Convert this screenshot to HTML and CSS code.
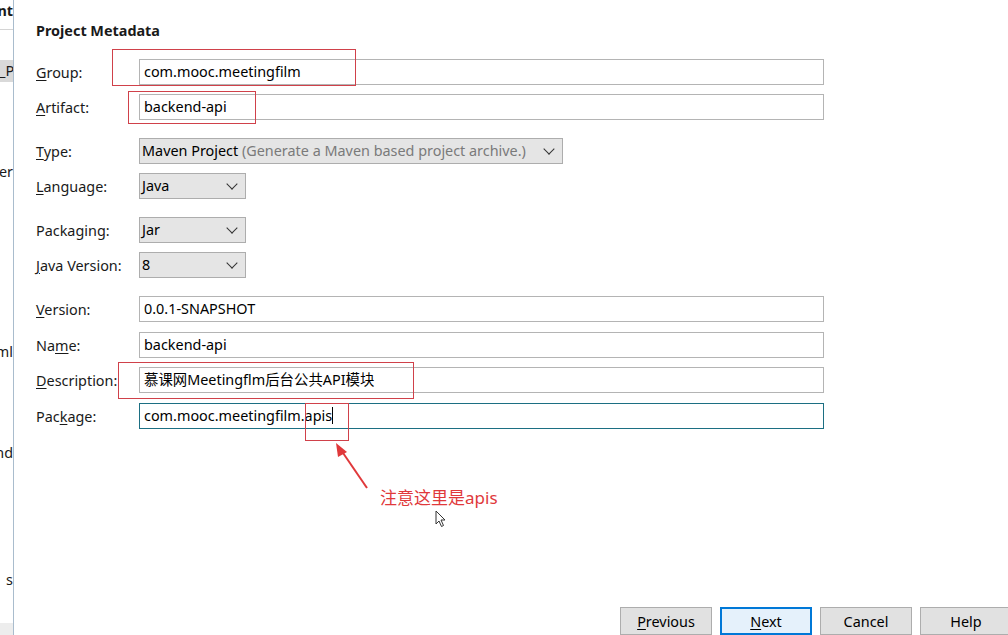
FILE: index.html
```html
<!DOCTYPE html>
<html lang="en">
<head>
  <meta charset="UTF-8" />
  <title>New Spring Starter Project</title>
  <link rel="stylesheet" href="styles.css">
</head>
<body>
  <div class="side">
    <div class="side-top">nt</div>
    <div class="side-sel">_P</div>
    <div class="side-txt t-er">er</div>
    <div class="side-txt t-ml">ml</div>
    <div class="side-txt t-nd">nd</div>
    <div class="side-txt t-s">s</div>
    <div class="side-foot"></div>
  </div>

  <div class="main">
    <h3 class="title">Project Metadata</h3>

    <div class="form">
      <div class="row">
        <label><u>G</u>roup:</label>
        <div class="field">com.mooc.meetingfilm</div>
      </div>
      <div class="row">
        <label><u>A</u>rtifact:</label>
        <div class="field">backend-api</div>
      </div>

      <div class="row gap">
        <label><u>T</u>ype:</label>
        <div class="select wide">Maven Project <span class="hint">(Generate a Maven based project archive.)</span><span class="chev"></span></div>
      </div>
      <div class="row">
        <label><u>L</u>anguage:</label>
        <div class="select small">Java<span class="chev"></span></div>
      </div>

      <div class="row gap">
        <label>Packaging:</label>
        <div class="select small">Jar<span class="chev"></span></div>
      </div>
      <div class="row">
        <label><u>J</u>ava Version:</label>
        <div class="select small">8<span class="chev"></span></div>
      </div>

      <div class="row gap">
        <label><u>V</u>ersion:</label>
        <div class="field">0.0.1-SNAPSHOT</div>
      </div>
      <div class="row wide-gap">
        <label>Na<u>m</u>e:</label>
        <div class="field">backend-api</div>
      </div>
      <div class="row">
        <label><u>D</u>escription:</label>
        <div class="field">慕课网Meetingflm后台公共API模块</div>
      </div>
      <div class="row wide-gap">
        <label>Pac<u>k</u>age:</label>
        <div class="field focus">com.mooc.meetingfilm.apis<span class="caret"></span></div>
      </div>
    </div>

    <!-- annotations drawn over the form -->
    <div class="mark m-group"></div>
    <div class="mark m-artifact"></div>
    <div class="mark m-desc"></div>
    <div class="mark m-apis"></div>
    <svg class="arrow" width="40" height="50" viewBox="0 0 40 50">
      <line x1="36" y1="46" x2="10" y2="8" stroke="#e0393b" stroke-width="2" />
      <polygon points="5,1 7,15 16,10" fill="#e0393b" />
    </svg>
    <div class="note">注意这里是apis</div>
    <svg class="cursor" width="12" height="18" viewBox="0 0 12 18">
      <path d="M1 1 L1 14 L4 11 L6.5 16.5 L8.5 15.5 L6 10 L10 10 Z" fill="#fff" stroke="#333" stroke-width="1" />
    </svg>

    <div class="buttons">
      <button class="btn"><u>P</u>revious</button>
      <button class="btn primary"><u>N</u>ext</button>
      <button class="btn">Cancel</button>
      <button class="btn">Help</button>
    </div>
  </div>
</body>
</html>
```

FILE: styles.css
```css
body {
  margin: 0;
  height: 635px;
  overflow: hidden;
  display: flex;
  background: #fff;
  font-family: 'Noto Sans', 'Noto Sans CJK SC', sans-serif;
  font-size: 14.4px;
  color: #1a1a1a;
}
u {
  text-decoration-thickness: 1px;
  text-underline-offset: 2px;
}

.side {
  width: 13px;
  flex-shrink: 0;
  border-right: 1px solid #a9bccd;
  display: flex;
  flex-direction: column;
  overflow: hidden;
  white-space: nowrap;
  direction: rtl;
  background: #fff;
}
.side-top {
  height: 29px;
  line-height: 22px;
  font-weight: bold;
  border-bottom: 1px solid #d4d4d4;
}
.side-sel {
  margin-top: 30px;
  height: 22px;
  line-height: 22px;
  background: #d9d9d9;
  text-align: left;
  direction: ltr;
  text-indent: -1px;
}
.side-txt {
  height: 20px;
  line-height: 20px;
}
.t-er { margin-top: 80px; }
.t-ml { margin-top: 160px; }
.t-nd { margin-top: 81px; }
.t-s { margin-top: 107px; }
.side-foot {
  margin-top: auto;
  height: 12px;
  background: #ededed;
}

.main {
  flex: 1;
  position: relative;
  display: flex;
  flex-direction: column;
  padding-left: 22px;
}
.title {
  margin: 22px 0 0;
  font-size: 14.4px;
  font-weight: bold;
  line-height: 18px;
}

.form {
  margin-top: 19px;
  display: flex;
  flex-direction: column;
  gap: 9px;
}
.row {
  display: flex;
  align-items: center;
  height: 26px;
}
.row.gap {
  margin-top: 9px;
}
.row.wide-gap {
  margin-top: 1px;
}
.row label {
  width: 103px;
  flex-shrink: 0;
}
.field {
  box-sizing: border-box;
  width: 685px;
  height: 26px;
  border: 1px solid #b4b4b4;
  padding: 0 4px;
  line-height: 24px;
  color: #000;
  position: relative;
}
.field.focus {
  border-color: #1c6f83;
}
.caret {
  display: inline-block;
  width: 1px;
  height: 17px;
  background: #000;
  vertical-align: -3px;
}
.select {
  box-sizing: border-box;
  height: 26px;
  border: 1px solid #adadad;
  background: #e5e5e5;
  padding: 0 2px;
  line-height: 24px;
  color: #000;
  position: relative;
}
.select.wide { width: 424px; }
.select.small { width: 107px; }
.hint { color: #7a7a7a; }
.chev {
  position: absolute;
  right: 9px;
  top: 6px;
  width: 7px;
  height: 7px;
  border-right: 1.2px solid #333;
  border-bottom: 1.2px solid #333;
  transform: rotate(45deg);
}

.mark {
  position: absolute;
  border: 1px solid #d0414a;
}
.m-group { left: 98px; top: 49px; width: 242px; height: 35px; }
.m-artifact { left: 114px; top: 91px; width: 126px; height: 31px; }
.m-desc { left: 104px; top: 362px; width: 294px; height: 35px; }
.m-apis { left: 291px; top: 403px; width: 42px; height: 36px; }
.arrow {
  position: absolute;
  left: 317px;
  top: 442px;
}
.note {
  position: absolute;
  left: 366px;
  top: 484px;
  color: #e0393b;
  font-size: 17px;
}
.cursor {
  position: absolute;
  left: 421px;
  top: 510px;
}

.buttons {
  margin-top: auto;
  margin-right: -4px;
  display: flex;
  justify-content: flex-end;
  gap: 8px;
}
.btn {
  width: 92px;
  height: 28px;
  font-family: inherit;
  font-size: 14.4px;
  color: #000;
  background: #e1e1e1;
  border: 1px solid #adadad;
  padding: 0;
}
.btn.primary {
  background: #e5f1fb;
  border: 2px solid #0078d7;
}
```
